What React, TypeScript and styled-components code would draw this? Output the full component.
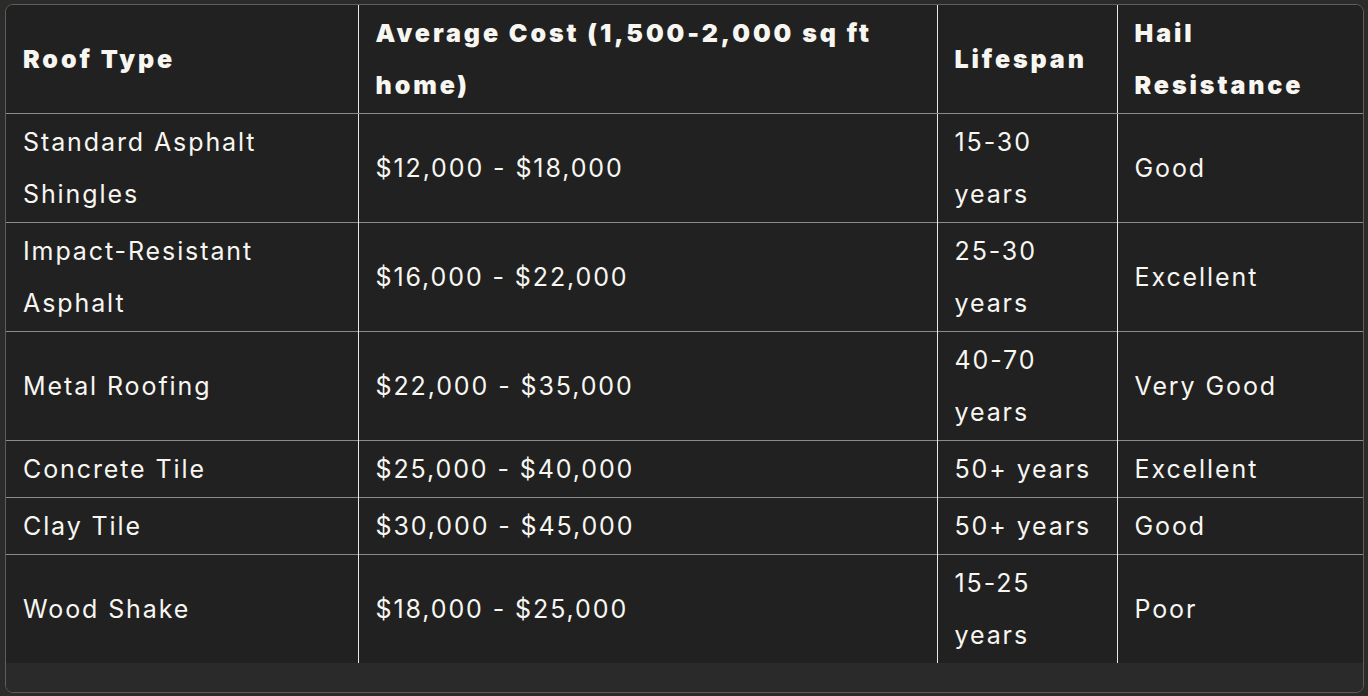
import React from 'react';
import styled, { createGlobalStyle } from 'styled-components';

type Row = {
    roof: string;
    cost: string;
    lifespan: string;
    hail: string;
}

const rows: Row[] = [
    {roof: 'Standard Asphalt Shingles', cost: '$12,000 - $18,000', lifespan: '15-30 years', hail: 'Good'},
    {roof: 'Impact-Resistant Asphalt', cost: '$16,000 - $22,000', lifespan: '25-30 years', hail: 'Excellent'},
    {roof: 'Metal Roofing', cost: '$22,000 - $35,000', lifespan: '40-70 years', hail: 'Very Good'},
    {roof: 'Concrete Tile', cost: '$25,000 - $40,000', lifespan: '50+ years', hail: 'Excellent'},
    {roof: 'Clay Tile', cost: '$30,000 - $45,000', lifespan: '50+ years', hail: 'Good'},
    {roof: 'Wood Shake', cost: '$18,000 - $25,000', lifespan: '15-25 years', hail: 'Poor'},
];

const columns = [
    {title: 'Roof Type', width: 352},
    {title: 'Average Cost (1,500-2,000 sq ft home)', width: 579},
    {title: 'Lifespan', width: 180},
    {title: 'Hail Resistance', width: 246},
];

const App = () => {
    return (
        <>
            <GlobalStyle />
            <Frame>
                <Table>
                    <colgroup>
                        {columns.map(col => <col key={col.title} style={{width: col.width}} />)}
                    </colgroup>
                    <thead>
                        <tr>
                            {columns.map(col => <HeadCell key={col.title}>{col.title}</HeadCell>)}
                        </tr>
                    </thead>
                    <tbody>
                        {rows.map(row => (
                            <BodyRow key={row.roof}>
                                <Cell>{row.roof}</Cell>
                                <Cell>{row.cost}</Cell>
                                <Cell>{row.lifespan}</Cell>
                                <Cell>{row.hail}</Cell>
                            </BodyRow>
                        ))}
                    </tbody>
                </Table>
                <ScrollStrip />
            </Frame>
        </>
    );
}

const GlobalStyle = createGlobalStyle`
  html, body {
    margin: 0;
    background: #2b2b2a;
  }
  body {
    font-family: Inter, "Noto Sans", sans-serif;
    color: #f7f6f1;
  }
`;

const Frame = styled.div`
  margin: 4px 4px 3px 5px;
  border: 1px solid #5d5d5b;
  border-radius: 8px;
  overflow: hidden;
  background: #2a2a2a;
`;

const Table = styled.table`
  width: 100%;
  table-layout: fixed;
  border-collapse: collapse;
  background: #212121;
`;

const HeadCell = styled.th`
  text-align: left;
  vertical-align: middle;
  padding: 2px 17px;
  font-size: 25px;
  line-height: 52px;
  font-weight: 900;
  letter-spacing: 2.9px;
  border-bottom: 1px solid #8a8a88;
  & + & {
    border-left: 1px solid #e8e8e4;
  }
`;

const BodyRow = styled.tr`
  & + & td {
    border-top: 1px solid #8a8a88;
  }
`;

const Cell = styled.td`
  vertical-align: middle;
  padding: 2px 17px;
  font-size: 25px;
  line-height: 52px;
  font-weight: 400;
  letter-spacing: 1.9px;
  & + & {
    border-left: 1px solid #e8e8e4;
  }
`;

const ScrollStrip = styled.div`
  height: 29px;
  background: #2a2a2a;
`;

export default App;
